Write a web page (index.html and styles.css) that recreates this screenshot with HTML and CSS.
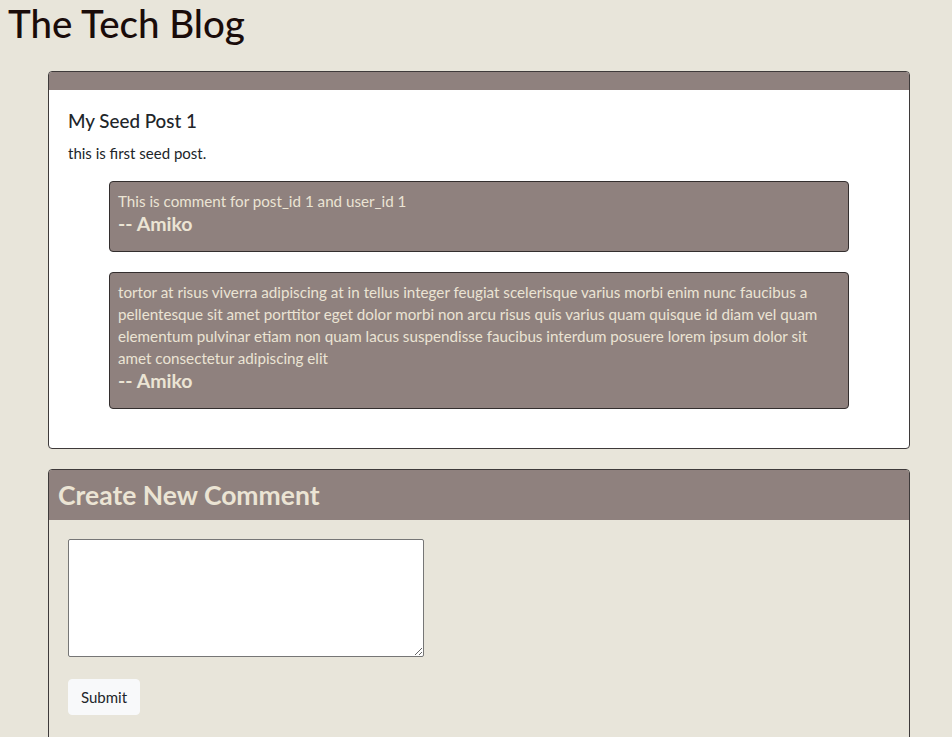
FILE: index.html
```html
<!DOCTYPE html>
<html lang="en">
<head>
<meta charset="utf-8">
<title>The Tech Blog</title>
<link rel="stylesheet" href="styles.css">
</head>
<body>
<header class="site-header">
  <h1 class="site-title">The Tech Blog</h1>
</header>
<main class="content">
  <article class="card post-card">
    <div class="card-header post-header"></div>
    <div class="card-body">
      <h5 class="post-title">My Seed Post 1</h5>
      <p class="post-text">this is first seed post.</p>
      <div class="comments">
        <div class="comment">
          <p class="comment-text">This is comment for post_id 1 and user_id 1</p>
          <h5 class="comment-author">-- Amiko</h5>
        </div>
        <div class="comment">
          <p class="comment-text">tortor at risus viverra adipiscing at in tellus integer feugiat scelerisque varius morbi enim nunc faucibus a pellentesque sit amet porttitor eget dolor morbi non arcu risus quis varius quam quisque id diam vel quam elementum pulvinar etiam non quam lacus suspendisse faucibus interdum posuere lorem ipsum dolor sit amet consectetur adipiscing elit</p>
          <h5 class="comment-author">-- Amiko</h5>
        </div>
      </div>
    </div>
  </article>
  <section class="card form-card">
    <div class="card-header form-header">
      <h2 class="form-title">Create New Comment</h2>
    </div>
    <form class="form-body">
      <textarea class="comment-input"></textarea>
      <button type="button" class="btn-submit">Submit</button>
    </form>
  </section>
</main>
</body>
</html>
```
FILE: styles.css
```css
* { box-sizing: border-box; }
html, body { margin: 0; padding: 0; }
body {
  background: #e8e5da;
  font-family: Lato, "Liberation Sans", sans-serif;
  font-size: 15px;
  line-height: 22px;
  color: #212529;
}
.site-header { padding: 0 0 0 8px; }
.site-title {
  margin: 0;
  font-size: 38.5px;
  font-weight: 500;
  line-height: 46px;
  color: #1a0c0a;
}
.content {
  padding: 25px 42px 0 48px;
  display: flex;
  flex-direction: column;
  gap: 20px;
}
.card {
  border: 1px solid #3e3a3a;
  border-radius: 4px;
  overflow: hidden;
}
.post-card { background: #ffffff; }
.card-header { background: #8f817e; }
.post-header { height: 18px; }
.card-body { padding: 19px 19px 19px 19px; }
.post-title {
  margin: 0 0 9px;
  font-size: 18.8px;
  font-weight: 500;
  line-height: 24px;
  color: #212529;
}
.post-text { margin: 0 0 17px; }
.comments {
  display: flex;
  flex-direction: column;
  gap: 20px;
  padding: 0 41px 20px 41px;
}
.comment {
  background: #8f817e;
  border: 1px solid #332e2e;
  border-radius: 4px;
  padding: 8px;
  color: #ebe4d4;
}
.comment-text { margin: 0; font-size: 15.2px; }
.comment-author {
  margin: 0 0 7px;
  font-size: 19.5px;
  font-weight: 700;
  line-height: 24px;
  color: #ebe4d4;
}
.form-card { background: #e8e5da; min-height: 300px; }
.form-header { padding: 9px 9px; height: 50px; }
.form-title {
  margin: 0;
  font-size: 26.5px;
  font-weight: 700;
  line-height: 32px;
  color: #ebe4d4;
}
.form-body {
  padding: 19px 19px;
  display: flex;
  flex-direction: column;
  align-items: flex-start;
  gap: 22px;
}
.comment-input {
  width: 356px;
  height: 118px;
  border: 1px solid #767676;
  border-radius: 2px;
  background: #fff;
  resize: vertical;
  font-family: inherit;
}
.btn-submit {
  font-family: inherit;
  font-size: 15px;
  line-height: 22px;
  padding: 6px 12px;
  border: 1px solid #f8f9fa;
  border-radius: 4px;
  background: #f8f9fa;
  color: #212529;
}
```
